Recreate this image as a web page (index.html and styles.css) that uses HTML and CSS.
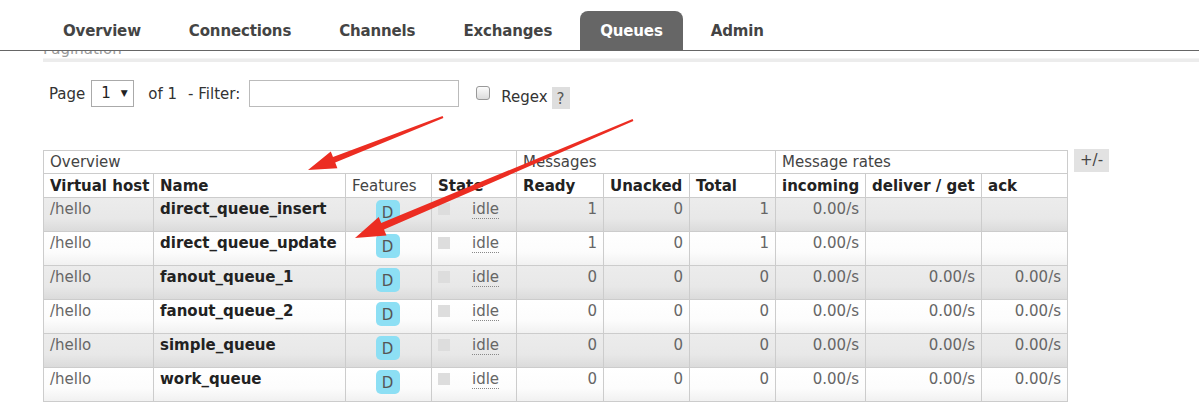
FILE: index.html
```html
<!DOCTYPE html>
<html lang="en">

<head>
  <meta charset="UTF-8" />
  <title>Queues</title>
  <link rel="stylesheet" href="styles.css">
</head>

<body>

  <!-- Menu atas -->
  <div class="nav">
    <a class="tab">Overview</a>
    <a class="tab">Connections</a>
    <a class="tab">Channels</a>
    <a class="tab">Exchanges</a>
    <a class="tab active">Queues</a>
    <a class="tab">Admin</a>
  </div>

  <div class="section-title">Pagination</div>

  <div class="filter-row">
    <span>Page</span>
    <span class="select">1 <span class="caret">▼</span></span>
    <span class="of">of 1</span>
    <span class="lbl">- Filter:</span>
    <input type="text" class="filter-input">
    <span class="checkbox"></span>
    <span class="regex">Regex</span>
    <span class="help">?</span>
  </div>

  <div class="table-wrap">
    <table class="list">
      <colgroup>
        <col style="width:110px">
        <col style="width:192px">
        <col style="width:86px">
        <col style="width:85px">
        <col style="width:87px">
        <col style="width:86px">
        <col style="width:86px">
        <col style="width:90px">
        <col style="width:116px">
        <col style="width:86px">
      </colgroup>
      <thead>
        <tr class="group">
          <th colspan="4">Overview</th>
          <th colspan="3">Messages</th>
          <th colspan="3">Message rates</th>
        </tr>
        <tr class="cols">
          <th>Virtual host</th>
          <th>Name</th>
          <th class="plain">Features</th>
          <th>State</th>
          <th>Ready</th>
          <th>Unacked</th>
          <th>Total</th>
          <th>incoming</th>
          <th>deliver / get</th>
          <th>ack</th>
        </tr>
      </thead>
      <tbody id="rows"></tbody>
    </table>
    <span class="toggle">+/-</span>
  </div>

  <!-- Panah anotasi -->
  <svg class="arrows" width="1199" height="413" viewBox="0 0 1199 413">
    <polygon points="442.6,116.1 333,157 330.8,151.4 308,170 337.4,168.2 335.2,162.6 443.4,117.9" />
    <polygon points="632.6,119.1 381.2,223.1 378.7,217.1 355,238 386.5,235.5 384,229.5 633.4,120.9" />
  </svg>

  <script>
    const queues = [
      { nama: "direct_queue_insert", ready: 1, unacked: 0, total: 1, rates: false },
      { nama: "direct_queue_update", ready: 1, unacked: 0, total: 1, rates: false },
      { nama: "fanout_queue_1", ready: 0, unacked: 0, total: 0, rates: true },
      { nama: "fanout_queue_2", ready: 0, unacked: 0, total: 0, rates: true },
      { nama: "simple_queue", ready: 0, unacked: 0, total: 0, rates: true },
      { nama: "work_queue", ready: 0, unacked: 0, total: 0, rates: true }
    ];

    document.getElementById("rows").innerHTML = queues.map((q, i) => `
      <tr class="${i % 2 === 0 ? "alt1" : "alt2"}">
        <td class="vhost">/hello</td>
        <td class="name">${q.nama}</td>
        <td class="features"><span class="badge">D</span></td>
        <td class="state"><span class="sq"></span><span class="idle">idle</span></td>
        <td class="num">${q.ready}</td>
        <td class="num">${q.unacked}</td>
        <td class="num">${q.total}</td>
        <td class="num">0.00/s</td>
        <td class="num">${q.rates ? "0.00/s" : ""}</td>
        <td class="num">${q.rates ? "0.00/s" : ""}</td>
      </tr>
    `).join("");
  </script>
</body>

</html>
```

FILE: styles.css
```css
body {
  margin: 0;
  font-family: 'DejaVu Sans', Verdana, sans-serif;
  font-size: 15px;
  color: #444;
  background: white;
  position: relative;
}

.nav {
  display: flex;
  align-items: flex-end;
  height: 50px;
  padding-left: 43px;
  border-bottom: 1px solid #666;
  background: white;
  position: relative;
  z-index: 2;
}

.tab {
  display: block;
  height: 39px;
  line-height: 41px;
  padding: 0 20px;
  margin-right: 8px;
  font-weight: bold;
  font-size: 15px;
  letter-spacing: -0.15px;
  color: #444;
  border-radius: 8px 8px 0 0;
}

.tab.active {
  background: #666;
  color: white;
}

.section-title {
  margin: -10px 0 0 43px;
  height: 16px;
  line-height: 16px;
  color: #999;
  font-size: 15px;
  padding-bottom: 1px;
  border-bottom: 1px solid #f4f4f4;
  box-shadow: 0 3px 0 #ececec;
}

.filter-row {
  display: flex;
  align-items: center;
  margin: 21px 0 0 49px;
  height: 27px;
  color: #333;
}

.select {
  display: inline-block;
  box-sizing: border-box;
  width: 43px;
  height: 27px;
  line-height: 25px;
  margin-left: 6px;
  padding-left: 9px;
  border: 1px solid #aaa;
  color: #222;
}

.caret {
  font-size: 9px;
  margin-left: 5px;
  vertical-align: 2px;
}

.of {
  margin-left: 14px;
}

.lbl {
  margin-left: 11px;
}

.filter-input {
  box-sizing: border-box;
  width: 210px;
  height: 27px;
  margin: 0 0 0 9px;
  border: 1px solid #bbb;
  padding: 0;
}

.checkbox {
  display: inline-block;
  box-sizing: border-box;
  width: 14px;
  height: 14px;
  margin-left: 17px;
  margin-top: -1px;
  border: 1px solid #999;
  border-radius: 3px;
  background: linear-gradient(#fcfcfc, #dcdcdc);
}

.regex {
  margin-left: 11px;
  margin-top: 6px;
}

.help {
  display: inline-block;
  width: 18px;
  height: 22px;
  line-height: 24px;
  margin-left: 4px;
  margin-top: 8px;
  text-align: center;
  background: #dedede;
  color: #555;
}

.table-wrap {
  display: flex;
  align-items: flex-start;
  margin: 43px 0 0 43px;
}

table.list {
  border-collapse: collapse;
  table-layout: fixed;
  width: 1024px;
  font-size: 15px;
}

table.list th,
table.list td {
  border: 1px solid #ccc;
  padding: 0 6px;
  white-space: nowrap;
  overflow: hidden;
  text-align: left;
}

tr.group th {
  height: 22px;
  font-weight: normal;
  color: #444;
}

tr.cols th {
  height: 23px;
  color: #222;
}

tr.cols th.plain {
  font-weight: normal;
  color: #444;
}

table.list td {
  height: 31px;
  vertical-align: top;
  padding-top: 1px;
  line-height: 20px;
  color: #666;
}

tr.alt1 {
  background: linear-gradient(#ececec 0%, #e8e8e8 60%, #dadada 100%);
}

tr.alt2 {
  background: linear-gradient(#ffffff 0%, #fcfcfc 60%, #f0f0f0 100%);
}

td.name {
  font-weight: bold;
  color: #222 !important;
}

td.features {
  text-align: center !important;
  padding-top: 2px !important;
}

.badge {
  display: inline-block;
  width: 24px;
  height: 24px;
  line-height: 26px;
  border-radius: 5px;
  background: #8ddff4;
  color: #555;
  margin-left: -2px;
}

.sq {
  display: inline-block;
  width: 12px;
  height: 12px;
  background: #ddd;
  margin-top: 4px;
  vertical-align: top;
}

.idle {
  display: inline-block;
  margin-left: 22px;
  line-height: 18px;
  border-bottom: 1px dotted #888;
}

td.num {
  text-align: right !important;
}

.toggle {
  display: inline-block;
  width: 35px;
  height: 23px;
  line-height: 23px;
  margin: -1px 0 0 6px;
  text-align: center;
  background: #e2e2e2;
  color: #444;
}

.arrows {
  position: absolute;
  left: 0;
  top: 0;
  pointer-events: none;
  z-index: 3;
}

.arrows polygon {
  fill: #ec2d22;
}
```
